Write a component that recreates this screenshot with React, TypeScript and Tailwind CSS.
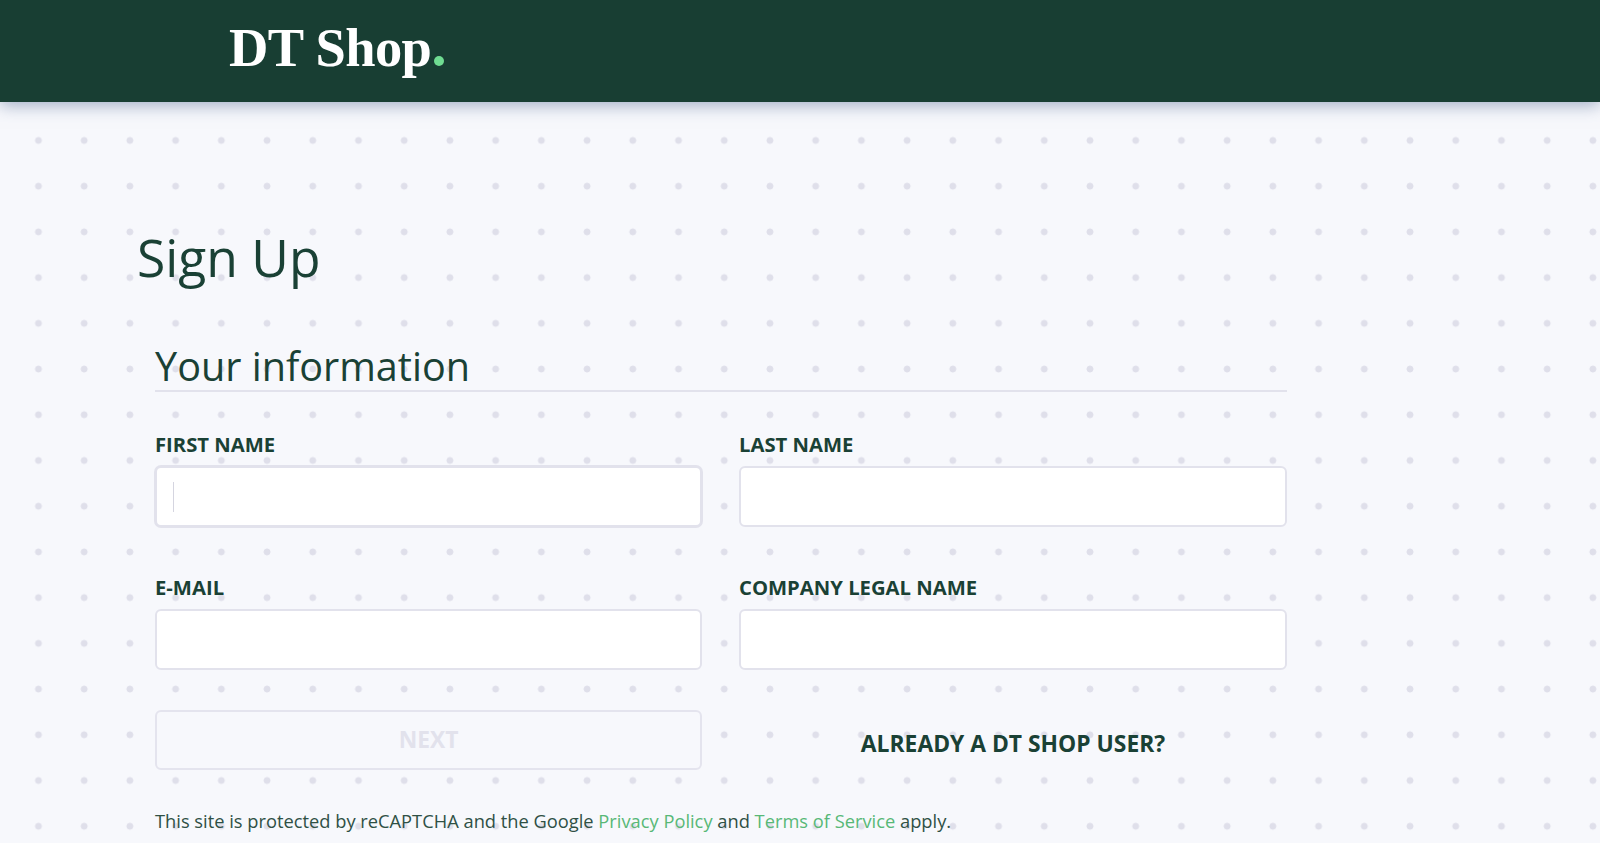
export default function App() {
  const sans = "font-['Open_Sans',sans-serif]";
  const label = "text-[20.25px] leading-[27px] font-bold text-[#1a4135] uppercase";
  const input = "h-[61px] w-full rounded-[6px] border-2 border-[#e2e2ec] bg-white";
  return (
    <div className={`${sans} h-[843px] w-full overflow-hidden bg-[#f7f8fc] text-[#1a4135]`}>
      <header className="relative z-10 flex h-[102px] items-center bg-[#183e33] pl-[229px] shadow-[0_3px_16px_rgba(70,95,140,0.5)]">
        <div className="flex items-baseline pb-[6px] font-['Liberation_Serif',serif] text-[54.5px] leading-none font-bold tracking-[-0.6px] text-white">
          DT Shop
          <span className="ml-[3px] inline-block h-[10px] w-[10px] rounded-full bg-[#6fdc92]" />
        </div>
      </header>
      <main className="h-[741px] bg-[radial-gradient(circle,#dfdfea_3.1px,transparent_3.8px)] bg-[length:45.72px_45.72px] bg-[position:15.6px_15.6px] pl-[137px]">
        <h1 className="pt-[123px] text-[51.6px] leading-[65px] font-normal">Sign Up</h1>
        <section className="w-[1150px] pt-[52px] pl-[18px]">
          <h2 className="border-b-2 border-[#e2e2ec] text-[39.6px] leading-[48px] font-normal">Your information</h2>
          <div className="grid grid-cols-[547px_548px] gap-x-[37px] pt-[39px]">
            <div>
              <label className={`block ${label}`}>First name</label>
              <div className={`${input} mt-[8px] flex items-center pl-[16px] shadow-[0_0_0_1px_#e2e2ec]`}>
                <span className="h-[30px] w-[1px] bg-[#d5d5e0]" />
              </div>
            </div>
            <div>
              <label className={`block ${label}`}>Last name</label>
              <div className={`${input} mt-[8px]`} />
            </div>
            <div className="pt-[47px]">
              <label className={`block ${label}`}>E-mail</label>
              <div className={`${input} mt-[8px]`} />
            </div>
            <div className="pt-[47px]">
              <label className={`block ${label}`}>Company legal name</label>
              <div className={`${input} mt-[8px]`} />
            </div>
            <button className="mt-[40px] h-[60px] rounded-[6px] border-2 border-[#e4e4ee] bg-[#f7f8fc] text-[22.8px] font-bold text-[#e2e2ec] uppercase">
              Next
            </button>
            <button className="mt-[40px] h-[60px] pt-[8px] text-[22.85px] font-bold text-[#1a4135] uppercase">
              Already a DT Shop user?
            </button>
          </div>
          <p className="pt-[39px] text-[18.3px] leading-[24px] text-[#2f5045]">
            This site is protected by reCAPTCHA and the Google{" "}
            <a className="text-[#58b877]">Privacy Policy</a> and{" "}
            <a className="text-[#58b877]">Terms of Service</a> apply.
          </p>
        </section>
      </main>
    </div>
  );
}
